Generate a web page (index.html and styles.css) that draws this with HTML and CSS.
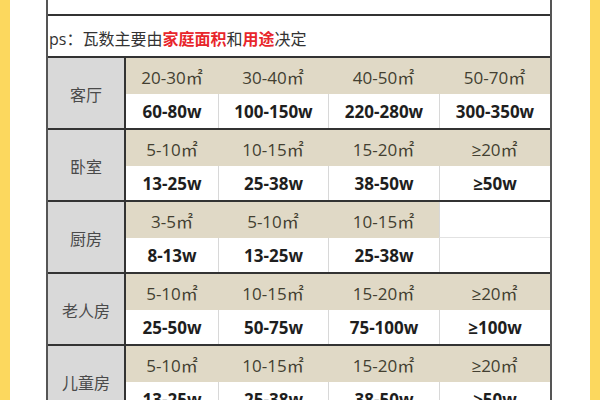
FILE: index.html
```html
<!DOCTYPE html>
<html lang="zh-CN">
<head>
<meta charset="utf-8">
<link rel="stylesheet" href="styles.css">
</head>
<body>
<div class="frame">
  <div class="table">
    <div class="title"><span>灯具瓦数参考表（按面积）</span></div>
    <div class="ps">ps：瓦数主要由<b>家庭面积</b>和<b>用途</b>决定</div>

    <div class="room">
      <div class="label">客厅</div>
      <div class="cells">
        <div class="area">20-30㎡</div><div class="area">30-40㎡</div><div class="area">40-50㎡</div><div class="area">50-70㎡</div>
        <div class="watt">60-80w</div><div class="watt">100-150w</div><div class="watt">220-280w</div><div class="watt">300-350w</div>
      </div>
    </div>

    <div class="room">
      <div class="label">卧室</div>
      <div class="cells">
        <div class="area">5-10㎡</div><div class="area">10-15㎡</div><div class="area">15-20㎡</div><div class="area">≥20㎡</div>
        <div class="watt">13-25w</div><div class="watt">25-38w</div><div class="watt">38-50w</div><div class="watt">≥50w</div>
      </div>
    </div>

    <div class="room">
      <div class="label">厨房</div>
      <div class="cells">
        <div class="area">3-5㎡</div><div class="area">5-10㎡</div><div class="area">10-15㎡</div><div class="area blank"></div>
        <div class="watt">8-13w</div><div class="watt">13-25w</div><div class="watt">25-38w</div><div class="watt"></div>
      </div>
    </div>

    <div class="room">
      <div class="label">老人房</div>
      <div class="cells">
        <div class="area">5-10㎡</div><div class="area">10-15㎡</div><div class="area">15-20㎡</div><div class="area">≥20㎡</div>
        <div class="watt">25-50w</div><div class="watt">50-75w</div><div class="watt">75-100w</div><div class="watt">≥100w</div>
      </div>
    </div>

    <div class="room">
      <div class="label">儿童房</div>
      <div class="cells">
        <div class="area">5-10㎡</div><div class="area">10-15㎡</div><div class="area">15-20㎡</div><div class="area">≥20㎡</div>
        <div class="watt">13-25w</div><div class="watt">25-38w</div><div class="watt">38-50w</div><div class="watt">≥50w</div>
      </div>
    </div>
  </div>
</div>
</body>
</html>
```
FILE: styles.css
```css
html, body {
  margin: 0;
  padding: 0;
  background: #ffffff;
}

.frame {
  width: 600px;
  height: 400px;
  box-sizing: border-box;
  border-left: 10px solid #fcd85e;
  border-right: 10px solid #fcd85e;
  background: #ffffff;
  overflow: hidden;
  font-family: "Open Sans", "Noto Sans CJK SC", sans-serif;
}

.table {
  width: 506px;
  margin-left: 36px;
  box-sizing: border-box;
  border-left: 2px solid #555;
  border-right: 2px solid #555;
}

.title {
  height: 14px;
  overflow: hidden;
  border-bottom: 2px solid #333;
  text-align: center;
}

.title span {
  display: block;
  margin-top: -20px;
  line-height: 20px;
  font-size: 19px;
  font-weight: 700;
  color: #f29a9c;
  font-family: "Noto Sans CJK SC", sans-serif;
}

.ps {
  height: 42px;
  box-sizing: border-box;
  padding: 12px 0 0 1px;
  font-size: 16px;
  line-height: 22px;
  color: #333;
  border-bottom: 2px solid #333;
  font-family: "Open Sans", "Noto Sans CJK SC", sans-serif;
}

.ps b {
  color: #e8262b;
  font-weight: 700;
}

.room {
  display: flex;
  border-bottom: 2px solid #333;
}

.label {
  width: 78px;
  box-sizing: border-box;
  border-right: 2px solid #333;
  background: #d9d9d9;
  color: #4a4a4a;
  font-family: "Noto Sans CJK SC", sans-serif;
  font-size: 16px;
  display: flex;
  align-items: center;
  justify-content: center;
  padding-top: 2px;
}

.cells {
  display: grid;
  grid-template-columns: 92px 110px 111px 111px;
  grid-template-rows: 36px 34px;
}

.area {
  background: #e0d9c6;
  color: #433f31;
  font-size: 17px;
  display: flex;
  align-items: center;
  justify-content: center;
}

.area.blank {
  background: #ffffff;
  border-left: 1px solid #d8d8d8;
  border-bottom: 1px solid #e2e2e2;
}

.watt {
  background: #ffffff;
  color: #1e1e1e;
  font-weight: 700;
  font-size: 17px;
  display: flex;
  align-items: center;
  justify-content: center;
  box-sizing: border-box;
}

.watt + .watt {
  border-left: 1px solid #d8d8d8;
}
```
